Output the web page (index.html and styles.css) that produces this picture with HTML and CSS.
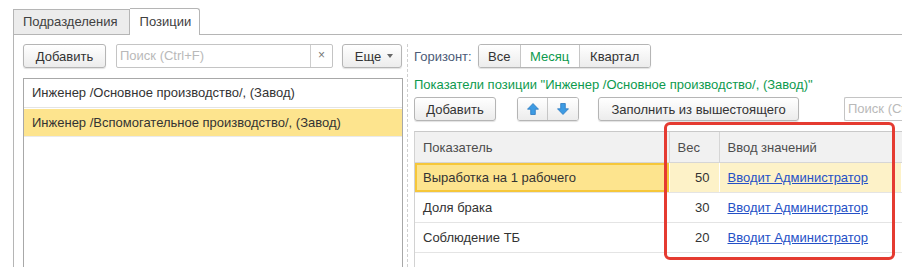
FILE: index.html
```html
<!DOCTYPE html>
<html lang="ru">
  <head>
    <meta charset="UTF-8" />
    <title>Позиции</title>
    <link rel="stylesheet" href="styles.css">
  </head>
  <body>
    <div class="tabs">
      <div class="tab">Подразделения</div>
      <div class="tab tab-active">Позиции</div>
      <div class="tab-fill"></div>
    </div>
    <div class="panel">
      <!-- список позиций -->
      <div class="left">
        <div class="toolbar">
          <button type="button" class="btn btn-add">Добавить</button>
          <div class="search search-left">
            <span class="placeholder">Поиск (Ctrl+F)</span>
            <span class="clear">×</span>
          </div>
          <button type="button" class="btn btn-more">Еще <span class="caret"></span></button>
        </div>
        <div class="list">
          <div class="list-row">Инженер /Основное производство/, (Завод)</div>
          <div class="list-row list-row-selected">Инженер /Вспомогательное производство/, (Завод)</div>
        </div>
      </div>
      <div class="divider"></div>
      <!-- показатели позиции -->
      <div class="right">
        <div class="horizon">
          <span class="label">Горизонт:</span>
          <div class="seg">
            <button type="button" class="seg-btn seg-all">Все</button>
            <button type="button" class="seg-btn seg-month seg-on">Месяц</button>
            <button type="button" class="seg-btn seg-quarter">Квартал</button>
          </div>
        </div>
        <div class="title">Показатели позиции "Инженер /Основное производство/, (Завод)"</div>
        <div class="toolbar toolbar-right">
          <button type="button" class="btn btn-add">Добавить</button>
          <div class="arrows">
            <button type="button" class="arrow-btn">
              <svg width="12" height="12" viewBox="0 0 12 12"><path d="M6 0.5 L11.5 6.2 H8.3 V11.5 H3.7 V6.2 H0.5 Z" fill="#3d9be3" stroke="#2a78c0" stroke-width="0.8" stroke-linejoin="round"/></svg>
            </button>
            <button type="button" class="arrow-btn">
              <svg width="12" height="12" viewBox="0 0 12 12"><path d="M6 11.5 L11.5 5.8 H8.3 V0.5 H3.7 V5.8 H0.5 Z" fill="#3d9be3" stroke="#2a78c0" stroke-width="0.8" stroke-linejoin="round"/></svg>
            </button>
          </div>
          <button type="button" class="btn btn-fill">Заполнить из вышестоящего</button>
          <div class="search search-right">
            <span class="placeholder">Поиск (Ctrl+F)</span>
          </div>
        </div>
        <div class="grid-wrap">
          <table class="grid">
            <colgroup>
              <col class="col-name">
              <col class="col-weight">
              <col class="col-input">
            </colgroup>
            <thead>
              <tr>
                <th>Показатель</th>
                <th>Вес</th>
                <th>Ввод значений</th>
              </tr>
            </thead>
            <tbody>
              <tr class="row-current">
                <td class="cell-focus">Выработка на 1 рабочего</td>
                <td class="num">50</td>
                <td><a href="#">Вводит Администратор</a></td>
              </tr>
              <tr>
                <td>Доля брака</td>
                <td class="num">30</td>
                <td><a href="#">Вводит Администратор</a></td>
              </tr>
              <tr>
                <td>Соблюдение ТБ</td>
                <td class="num">20</td>
                <td><a href="#">Вводит Администратор</a></td>
              </tr>
            </tbody>
          </table>
        </div>
        <div class="highlight"></div>
      </div>
    </div>
  </body>
</html>
```

FILE: styles.css
```css
html, body {
  margin: 0;
  overflow: hidden;
  background: #fff;
}
body {
  font: 13px "Liberation Sans", Arial, sans-serif;
  color: #333;
  width: 902px;
  height: 268px;
}

/* вкладки */
.tabs {
  display: flex;
  align-items: flex-end;
  height: 27px;
  padding-top: 8px;
  padding-left: 13px;
}
.tab {
  box-sizing: border-box;
  height: 26px;
  line-height: 24px;
  padding: 0 11px 0 9px;
  border: 1px solid #b5b5b5;
  background: #ececec;
  color: #404040;
}
.tab-active {
  height: 27px;
  line-height: 26px;
  padding: 0 8px 0 10px;
  background: #fff;
  border-left: none;
  border-bottom: none;
  border-radius: 0 3px 0 0;
}
.tab-fill {
  flex: 1;
  border-bottom: 1px solid #b5b5b5;
}

.panel {
  display: flex;
  margin-left: 13px;
  padding-top: 9px;
  height: 223px;
  border-left: 1px solid #b5b5b5;
}
.left {
  width: 380px;
  margin-left: 9px;
  display: flex;
  flex-direction: column;
}
.divider {
  margin-left: 4px;
  border-left: 1px dashed #cfcfcf;
}
.right {
  position: relative;
  flex: 1;
  min-width: 0;
  overflow: hidden;
  margin-left: 6px;
  display: flex;
  flex-direction: column;
}

/* кнопки и поля */
.toolbar {
  display: flex;
  height: 24px;
}
.btn {
  box-sizing: border-box;
  flex-shrink: 0;
  height: 24px;
  padding: 0;
  border: 1px solid #b5b5b5;
  border-radius: 3px;
  background: linear-gradient(#ffffff, #ececec);
  box-shadow: 0 1px 1px rgba(0,0,0,0.12);
  font: inherit;
  color: #333;
}
.btn-add {
  width: 83px;
}
.btn-more {
  width: 60px;
  margin-left: 9px;
  display: flex;
  align-items: center;
  justify-content: center;
  gap: 6px;
  padding-left: 4px;
}
.caret {
  width: 0;
  height: 0;
  border-top: 4px solid #666;
  border-left: 3.5px solid transparent;
  border-right: 3.5px solid transparent;
}
.search {
  box-sizing: border-box;
  flex-shrink: 0;
  display: flex;
  height: 24px;
  overflow: hidden;
  border: 1px solid #c4c4c4;
  border-radius: 2px;
  background: #fff;
}
.placeholder {
  padding-left: 3px;
  line-height: 22px;
  color: #b9b9b9;
  white-space: nowrap;
}
.search-left {
  width: 217px;
  margin-left: 10px;
}
.clear {
  margin-left: auto;
  width: 21px;
  border-left: 1px solid #cdcdcd;
  text-align: center;
  line-height: 21px;
  color: #777;
  font-size: 12px;
}

/* список */
.list {
  flex: 1;
  margin-top: 10px;
  border: 1px solid #a8a8a8;
  border-bottom: none;
}
.list-row {
  height: 28px;
  line-height: 28px;
  padding-left: 8px;
  border-bottom: 1px solid #e4e4e4;
}
.list-row-selected {
  height: 27px;
  line-height: 27px;
  margin-top: 1px;
  background: #fde48e;
  border-bottom-color: #eaeaea;
}

/* горизонт */
.horizon {
  display: flex;
  align-items: center;
  height: 24px;
}
.label {
  color: #4c5b77;
}
.seg {
  display: flex;
  margin-left: 6px;
  height: 24px;
  box-sizing: border-box;
  border: 1px solid #b5b5b5;
  border-radius: 3px;
  overflow: hidden;
  box-shadow: 0 1px 1px rgba(0,0,0,0.12);
}
.seg-btn {
  border: none;
  border-right: 1px solid #c6c6c6;
  background: linear-gradient(#ffffff, #ececec);
  font: inherit;
  color: #333;
  padding: 0;
}
.seg-btn:last-child {
  border-right: none;
}
.seg-all { width: 42px; }
.seg-month { width: 59px; }
.seg-quarter { width: 70px; }
.seg-on {
  color: #0d9a4e;
  background: #fff;
}

.title {
  margin-top: 9px;
  line-height: 16px;
  color: #0d9a4e;
  white-space: nowrap;
}
.toolbar-right {
  margin-top: 4px;
}
.toolbar-right .btn-add {
  width: 82px;
}
.arrows {
  display: flex;
  flex-shrink: 0;
  margin-left: 21px;
  box-sizing: border-box;
  height: 24px;
  border: 1px solid #b5b5b5;
  border-radius: 3px;
  overflow: hidden;
  box-shadow: 0 1px 1px rgba(0,0,0,0.12);
}
.arrow-btn {
  width: 30px;
  padding: 0;
  border: none;
  border-right: 1px solid #c6c6c6;
  background: linear-gradient(#ffffff, #ececec);
  display: flex;
  align-items: center;
  justify-content: center;
}
.arrow-btn:last-child {
  border-right: none;
}
.btn-fill {
  width: 201px;
  margin-left: 19px;
}
.search-right {
  width: 59px;
  margin-left: 45px;
  border-right: none;
  border-radius: 2px 0 0 2px;
}

/* таблица */
.grid-wrap {
  flex: 1;
  margin-top: 10px;
  border-top: 1px solid #c9c9c9;
  border-left: 1px solid #d2d2d2;
}
.grid {
  width: 100%;
  border-collapse: collapse;
  table-layout: fixed;
}
.col-name { width: 254px; }
.col-weight { width: 50px; }
.grid th {
  height: 30px;
  padding: 0 8px;
  text-align: left;
  font-weight: normal;
  color: #4d4d4d;
  background: #f1f1f1;
  border-right: 1px solid #d6d6d6;
  border-bottom: 1px solid #d6d6d6;
}
.grid th:last-child {
  border-right: none;
}
.grid td {
  height: 29px;
  padding: 0 8px;
  border-bottom: 1px solid #e4e4e4;
  border-right: 1px solid #fff;
  white-space: nowrap;
}
.grid td.num {
  text-align: right;
  padding-right: 9px;
}
.grid a {
  color: #2450c6;
}
.row-current td {
  background: #fdf2c8;
}
.row-current td.cell-focus {
  background: #fde48e;
  box-shadow: inset 0 0 0 2px #f6c73a;
}

/* выделение */
.highlight {
  position: absolute;
  left: 250px;
  top: 78px;
  width: 231px;
  height: 138px;
  box-sizing: border-box;
  border: 3px solid #e53b31;
  border-radius: 6px;
}
```
